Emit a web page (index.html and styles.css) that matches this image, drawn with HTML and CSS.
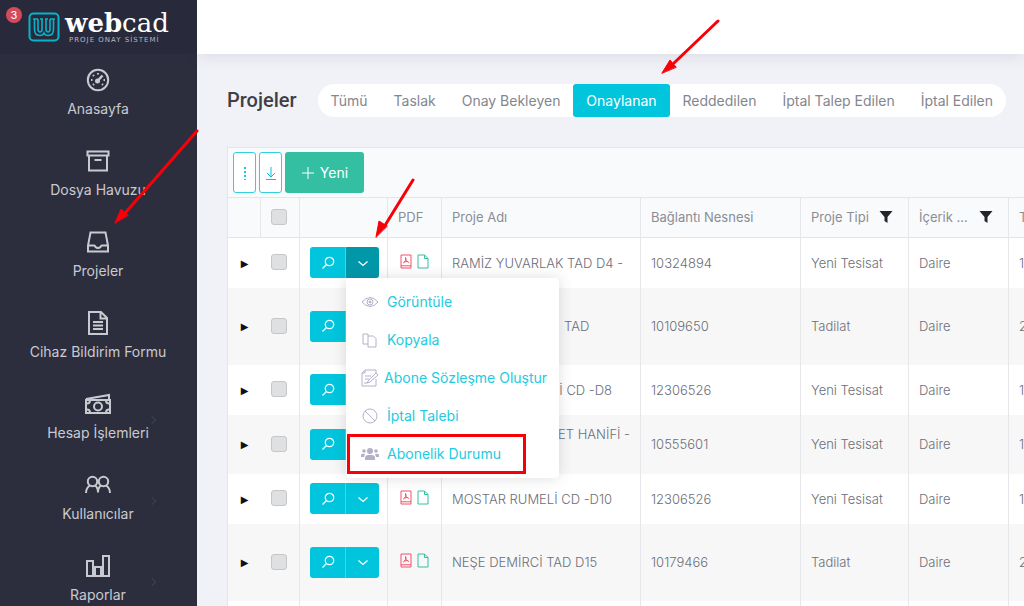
FILE: index.html
```html
<!DOCTYPE html>
<html lang="tr">
<head>
<meta charset="utf-8">
<title>Projeler</title>
<link rel="stylesheet" href="styles.css">
</head>
<body>
<svg class="defs" aria-hidden="true">
  <symbol id="search" viewBox="0 0 14 14"><circle cx="8.500" cy="5.500" r="4.200"/><path d="M5.500 8.500L1.500 12.500"/></symbol>
  <symbol id="chev" viewBox="0 0 12 12"><path d="M1.500 4.500L6 8.500l4.500-4"/></symbol>
  <symbol id="pdf" viewBox="0 0 12 15"><path d="M1 1h10v13H1zM1 11.800h10M5.500 3.500c1.500 2-1 5-2.500 5.500M5.500 3.500c-.5 2 1.500 4.500 3.500 5M4 8l4-.5"/></symbol>
  <symbol id="doc" viewBox="0 0 12 15"><path d="M1 1h6.500L11 4.500V14H1zM7.500 1v3.500H11"/></symbol>
  <symbol id="funnel" viewBox="0 0 14 14"><path d="M.5 1h13L8.500 7v6L5.500 11V7z"/></symbol>
</svg>
<div class="app">
  <aside class="sidebar">
    <div class="brand">
      <span class="count">3</span>
      <svg class="mark" viewBox="0 0 32 30"><rect x="1.500" y="1.500" width="29" height="27" rx="4"/><path d="M5 7h5M12 7h3M17 7h3M22 7h5M10 7v10q0 3 2 3t2-3V7M22 7v10q0 3-2 3t-2-3V7M6.500 7v10.500q0 6 5.500 6 3 0 4-2.500 1 2.500 4 2.500 5.500 0 5.500-6V7"/></svg>
      <div class="words"><div class="name"><b>web</b>cad</div><div class="tag">PROJE ONAY SİSTEMİ</div></div>
    </div>
    <nav class="nav">
      <a href="#"><svg viewBox="0 0 26 26"><circle cx="13" cy="13" r="10.200"/><path d="M13 13.500L17.500 8.500" stroke-width="2.600"/><circle cx="12.500" cy="14" r="1.500" class="solid"/><path d="M13 6v1.500M8 8l1 1M6 13h1.500M8 18l1-1M18 18l-1-1M20 13h-1.500"/></svg>Anasayfa</a>
      <a href="#"><svg viewBox="0 0 26 26"><path d="M2.500 3.500h21v4h-21zM4 7.500h18v15H4zM9.500 12h7"/></svg>Dosya Havuzu</a>
      <a href="#"><svg viewBox="0 0 26 26"><path d="M5.500 3.500h15l2.500 13v6H3v-6zM3 16.500h6q1 0 1.500 1.500 1 1 2.500 1t2.500-1q.5-1.500 1.500-1.500h6"/></svg>Projeler</a>
      <a href="#"><svg viewBox="0 0 26 26"><path d="M4 2h12l6 6v16H4zM15.500 2v6.500H22M8 12h10M8 15.500h10M8 19h10"/></svg>Cihaz Bildirim Formu</a>
      <a href="#" class="more"><svg viewBox="0 0 26 26"><path d="M1 9h24v13H1zM1 8L24 4v5"/><circle cx="13" cy="15.500" r="4"/><path d="M2 12.500q3 0 3-3M2 18.500q3 0 3 3M24 12.500q-3 0-3-3M24 18.500q-3 0-3 3"/></svg>Hesap İşlemleri</a>
      <a href="#" class="more"><svg viewBox="0 0 26 26"><circle cx="7.500" cy="9.500" r="4.700"/><circle cx="18.500" cy="9.500" r="4.700"/><path d="M1 21q0-5 4-7.500M25 21q0-5-4-7.500M10 13.500q3 2 3 7 0-5 3-7"/></svg>Kullanıcılar</a>
      <a href="#" class="more"><svg viewBox="0 0 26 26"><path d="M2 8h6v15H2zM10 14h6v9h-6zM18 3h6v20h-6z"/></svg>Raporlar</a>
    </nav>
  </aside>
  <div class="page">
    <header class="topbar"></header>
    <main>
      <div class="titlebar">
        <h1>Projeler</h1>
        <div class="tabs">
          <button>Tümü</button><button>Taslak</button><button>Onay Bekleyen</button><button class="on">Onaylanan</button><button>Reddedilen</button><button>İptal Talep Edilen</button><button>İptal Edilen</button>
        </div>
      </div>
      <section class="grid">
        <div class="tools">
          <button class="outline" aria-label="Menü"><svg viewBox="0 0 12 16"><path d="M6 2v2M6 6v2M6 10v2M6 14v1" stroke-width="1.800"/></svg></button>
          <button class="outline" aria-label="İndir"><svg viewBox="0 0 12 16"><path d="M6 2v10M2 8l4 4 4-4M1 14.500h10"/></svg></button>
          <button class="new"><svg viewBox="0 0 14 14"><path d="M7 1v12M1 7h12"/></svg>Yeni</button>
        </div>
        <table>
          <colgroup><col class="c1"><col class="c2"><col class="c3"><col class="c4"><col class="c5"><col class="c6"><col class="c7"><col class="c8"><col class="c9"></colgroup>
          <thead><tr><th></th><th class="mid"><input type="checkbox" aria-label="Tümünü seç"></th><th></th><th>PDF</th><th>Proje Adı</th><th>Bağlantı Nesnesi</th><th><span class="flt">Proje Tipi<svg><use href="#funnel"/></svg></span></th><th><span class="flt">İçerik ...<svg><use href="#funnel"/></svg></span></th><th>T</th></tr></thead>
          <tbody>
            <tr><td class="exp">▶</td><td class="mid"><input type="checkbox" aria-label="Seç"></td>
              <td><div class="split"><button aria-label="Ara"><svg><use href="#search"/></svg></button><button class="open" aria-label="Seçenekler"><svg><use href="#chev"/></svg></button>
                <div class="menu">
                  <a href="#"><svg viewBox="0 0 18 18"><path d="M1 9q8-9 16 0-8 9-16 0z"/><circle cx="9" cy="9" r="3"/><circle cx="9" cy="9" r="1" class="solid"/></svg>Görüntüle</a>
                  <a href="#"><svg viewBox="0 0 18 18"><path d="M7 5V3H2v10h5M7 5h5.500L15 7.500V16H7z"/></svg>Kopyala</a>
                  <a href="#" class="tight"><svg viewBox="0 0 18 18"><path d="M15 10v7H1V4l3-3h11v3M4 1v3H1M4 7h6M4 10h4M3 14h3l1-2 8-8 2 2-8 7-3 1"/></svg>Abone Sözleşme Oluştur</a>
                  <a href="#"><svg viewBox="0 0 18 18"><circle cx="9" cy="9" r="7"/><path d="M4 4l10 10"/></svg>İptal Talebi</a>
                  <a href="#"><svg viewBox="0 0 18 18" class="fill"><circle cx="9" cy="6" r="3"/><circle cx="3" cy="6" r="1.800"/><circle cx="15" cy="6" r="1.800"/><path d="M4 15v-3q1-2 3-2h4q2 0 3 2v3zM0 12V9.500q1-1 4-.5L3 12zM18 12V9.500q-1-1-4-.5l1 3z"/></svg>Abonelik Durumu</a>
                </div></div></td>
              <td class="files"><svg class="pdf"><use href="#pdf"/></svg><svg class="doc"><use href="#doc"/></svg></td><td>RAMİZ YUVARLAK TAD D4 -</td><td>10324894</td><td>Yeni Tesisat</td><td>Daire</td><td>1</td></tr>
            <tr class="tall"><td class="exp">▶</td><td class="mid"><input type="checkbox" aria-label="Seç"></td>
              <td><div class="split"><button aria-label="Ara"><svg><use href="#search"/></svg></button><button aria-label="Seçenekler"><svg><use href="#chev"/></svg></button></div></td>
              <td class="files"><svg class="pdf"><use href="#pdf"/></svg><svg class="doc"><use href="#doc"/></svg></td><td class="tail">TAD</td><td>10109650</td><td>Tadilat</td><td>Daire</td><td>2</td></tr>
            <tr><td class="exp">▶</td><td class="mid"><input type="checkbox" aria-label="Seç"></td>
              <td><div class="split"><button aria-label="Ara"><svg><use href="#search"/></svg></button><button aria-label="Seçenekler"><svg><use href="#chev"/></svg></button></div></td>
              <td class="files"><svg class="pdf"><use href="#pdf"/></svg><svg class="doc"><use href="#doc"/></svg></td><td class="lead">Lİ CD -D8</td><td>12306526</td><td>Yeni Tesisat</td><td>Daire</td><td>1</td></tr>
            <tr class="two"><td class="exp">▶</td><td class="mid"><input type="checkbox" aria-label="Seç"></td>
              <td><div class="split"><button aria-label="Ara"><svg><use href="#search"/></svg></button><button aria-label="Seçenekler"><svg><use href="#chev"/></svg></button></div></td>
              <td class="files"><svg class="pdf"><use href="#pdf"/></svg><svg class="doc"><use href="#doc"/></svg></td><td class="end">ET HANİFİ -</td><td>10555601</td><td>Yeni Tesisat</td><td>Daire</td><td>1</td></tr>
            <tr><td class="exp">▶</td><td class="mid"><input type="checkbox" aria-label="Seç"></td>
              <td><div class="split"><button aria-label="Ara"><svg><use href="#search"/></svg></button><button aria-label="Seçenekler"><svg><use href="#chev"/></svg></button></div></td>
              <td class="files"><svg class="pdf"><use href="#pdf"/></svg><svg class="doc"><use href="#doc"/></svg></td><td>MOSTAR RUMELİ CD -D10</td><td>12306526</td><td>Yeni Tesisat</td><td>Daire</td><td>1</td></tr>
            <tr class="tall"><td class="exp">▶</td><td class="mid"><input type="checkbox" aria-label="Seç"></td>
              <td><div class="split"><button aria-label="Ara"><svg><use href="#search"/></svg></button><button aria-label="Seçenekler"><svg><use href="#chev"/></svg></button></div></td>
              <td class="files"><svg class="pdf"><use href="#pdf"/></svg><svg class="doc"><use href="#doc"/></svg></td><td>NEŞE DEMİRCİ TAD D15</td><td>10179466</td><td>Tadilat</td><td>Daire</td><td>2</td></tr>
            <tr><td></td><td></td><td></td><td></td><td></td><td></td><td></td><td></td><td></td></tr>
          </tbody>
        </table>
      </section>
    </main>
  </div>
</div>
<svg class="notes" width="1024" height="606" aria-hidden="true">
  <path d="M718 21L674 63M197 131L126 212M413 180L384 227"/>
  <rect x="348.500" y="435.500" width="176" height="37"/>
  <path class="heads" d="M662 73l8-13 6 7zM115 223l6-14 7 6zM376 237l3-16 8 5z"/>
</svg>
</body>
</html>
```
FILE: styles.css
```css
* { box-sizing: border-box; }
body { margin: 0; font: 13px/20px Inter, "Open Sans", sans-serif; color: #6c6e78; background: #f1f2f7; }
button { font: inherit; color: inherit; border: 0; padding: 0; background: none; cursor: pointer; }
a { text-decoration: none; color: inherit; }
svg { fill: none; stroke: currentColor; display: block; flex: none; }
.solid, .fill { fill: currentColor; }
.fill { stroke: none; }
.defs { position: absolute; width: 0; height: 0; }

.app { display: flex; height: 100vh; overflow: hidden; }
.sidebar { width: 197px; flex: none; background: #2c2e3e; color: #c9cad0; overflow: hidden; }
.brand { position: relative; display: flex; gap: 5px; height: 54px; padding: 12px 0 0 28px; background: #282a3c; }
.count { position: absolute; left: 6px; top: 7px; width: 16px; height: 16px; border-radius: 50%; background: #d34a5c; color: #fff; font-size: 11px; line-height: 16px; text-align: center; }
.mark { width: 32px; height: 30px; color: #08b3c9; stroke-width: 2; }
.mark path { stroke-width: 1.6; }
.words { margin-top: -2px; }
.name { font: 26px/26px "DejaVu Serif", serif; color: #fff; }
.tag { font: 8px/8px "DejaVu Sans", sans-serif; color: #b6b7c0; white-space: nowrap; padding-left: 4px; letter-spacing: 1px; }
.tag { font-size: 7px; }
.nav { padding: 13px 1px 0 0; }
.nav a { position: relative; display: flex; flex-direction: column; align-items: center; gap: 6px; height: 81px; font-size: 14px; }
.nav svg { width: 26px; height: 26px; stroke-width: 2; }
.more::after { content: ""; position: absolute; left: 149px; top: 26px; width: 5px; height: 5px; border: solid #3e4055; border-width: 1px 1px 0 0; transform: rotate(45deg); }

.page { flex: 1; min-width: 0; display: flex; flex-direction: column; }
.topbar { height: 54px; flex: none; background: #fff; box-shadow: 0 2px 16px rgba(60, 60, 90, .12); }
main { padding: 30px 0 0 30px; }
.titlebar { display: flex; align-items: center; gap: 21px; padding-right: 18px; }
h1 { margin: 0; font: 500 20px/33px Roboto, sans-serif; color: #3f4047; }
.tabs { flex: 1; display: flex; border-radius: 17px; background: #fff; color: #84868e; font-size: 14px; }
.tabs button { flex: 1 1 auto; height: 33px; white-space: nowrap; }
.tabs .on { background: #00c5dc; color: #fff; border-radius: 3px; }

.grid { margin-top: 30px; border: solid #e3e5ea; border-width: 1px 0 0 1px; overflow: hidden; }
.tools { display: flex; gap: 3px; padding: 4px 5px; background: #f9fafc; }
.tools button { display: flex; align-items: center; justify-content: center; height: 41px; border-radius: 3px; }
.outline { width: 23px; color: #00c5dc; background: #fff; }
.outline svg { width: 12px; height: 16px; }
.tools .outline { border: 1px solid #32cfe0; }
.tools .new { width: 79px; gap: 5px; background: #34bfa3; color: #fff; font-size: 14px; }
.new svg { width: 14px; height: 14px; }

table { width: 100%; min-width: 880px; table-layout: fixed; border-collapse: separate; border-spacing: 0; background: #fff; font-weight: 300; }
.c1 { width: 33px; } .c2 { width: 39px; } .c3 { width: 88px; } .c4 { width: 54px; } .c5 { width: 199px; } .c6 { width: 160px; } .c7 { width: 108px; } .c8 { width: 100px; } .c9 { width: 99px; }
th, td { padding: 0 10px; text-align: left; white-space: nowrap; border-right: 1px solid #e6e7ea; }
th { height: 41px; font-weight: 400; color: #8b8d94; background: #f9fafc; border-top: 1px solid #e3e5ea; border-bottom: 1px solid #e3e5ea; padding-bottom: 2px; }
td { height: 50px; padding-bottom: 1px; }
td:first-child { border-right: 0; }
tr:nth-child(even) td { background: #f7f7f7; }
.tall td { height: 77px; }
.two td { height: 59px; }
.mid { padding: 0 3px 2px 0; text-align: center; }
.exp { padding: 0; text-align: center; font: 10px "DejaVu Sans", sans-serif; color: #111; }
input { appearance: none; display: block; width: 16px; height: 16px; margin: 0 auto; border: 1px solid #c6c7c9; border-radius: 3px; background: #dfe0e2; }
.flt { display: flex; justify-content: space-between; align-items: center; padding-right: 5px; }
.flt svg { width: 14px; height: 14px; fill: #212529; stroke: none; }
.tail { padding-left: 122px; }
.lead { padding-left: 110px; }
.end { vertical-align: top; text-align: right; padding-top: 9px; }
.files svg { display: inline-block; width: 12px; height: 15px; margin: 0 5px 0 2px; vertical-align: middle; }
.files { padding: 0 0 6px 10px; }
.files .doc { margin: 0; color: #34bfa3; }
.files .pdf { color: #f4516c; }

.split { position: relative; display: flex; width: 69px; color: #fff; }
.split button { flex: 1; height: 31px; background: #00c5dc; display: flex; align-items: center; justify-content: center; }
.split button:first-child { border-radius: 3px 0 0 3px; border-right: 1px solid #40d4e5; flex: 0 0 36px; }
.split button:nth-child(2) { border-radius: 0 3px 3px 0; }
.split .open { background: #0097a9; }
.split svg { width: 14px; height: 14px; stroke-width: 1.3; }
.split button:nth-child(2) svg { width: 12px; height: 12px; }
.menu { position: absolute; left: 36px; top: 31px; z-index: 2; width: 213px; padding: 5px 0; background: #fff; color: #22cbe0; border-radius: 4px; box-shadow: 0 0 14px rgba(69, 65, 78, .18); font-size: 14px; font-weight: 400; }
.menu a { display: flex; align-items: center; gap: 8px; height: 38px; padding-left: 15px; }
.menu a.tight { gap: 5px; }
.menu svg { width: 18px; height: 18px; color: #b3b0c8; stroke-width: 1; }
.menu .fill { stroke: none; }

.notes { position: absolute; left: 0; top: 0; z-index: 5; pointer-events: none; color: #f80008; stroke-width: 3; stroke-linecap: round; }
.notes .heads { fill: currentColor; stroke-width: 1; }
```
